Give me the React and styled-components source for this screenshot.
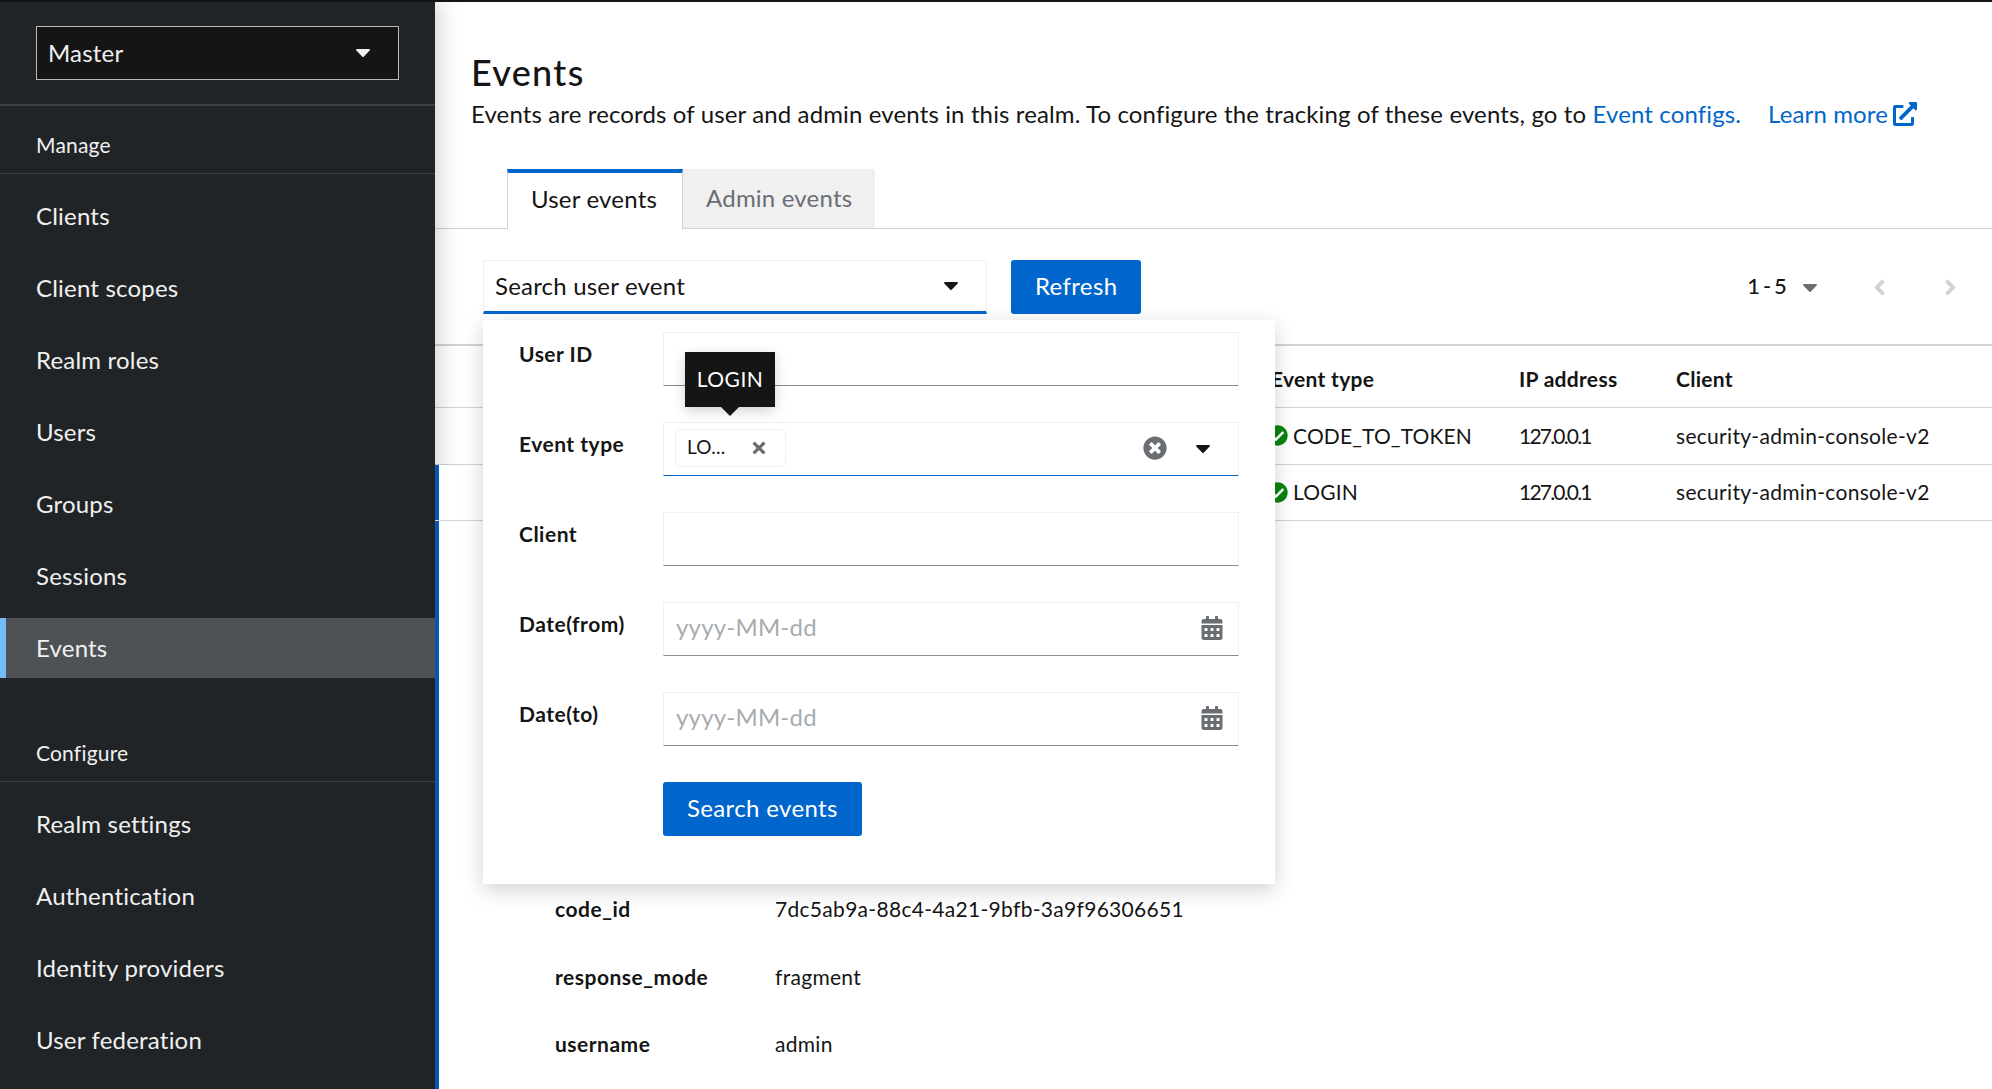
import React from 'react';
import styled, { createGlobalStyle } from 'styled-components';
import {
  FaCaretDown,
  FaTimes,
  FaTimesCircle,
  FaCheckCircle,
  FaCalendarAlt,
  FaExternalLinkAlt,
  FaAngleLeft,
  FaAngleRight
} from 'react-icons/fa';

const GlobalStyle = createGlobalStyle`
  html, body {
    margin: 0;
    padding: 0;
    height: 100%;
    overflow: hidden;
    background: #fff;
  }

  body {
    font-family: "Lato", "Liberation Sans", sans-serif;
    font-size: 24px;
    letter-spacing: 0.2px;
    color: #151515;
  }

  * {
    box-sizing: border-box;
  }
`;

const Page = styled.div`
  height: 1089px;
  display: flex;
  flex-direction: column;
  overflow: hidden;
`;

const TopLine = styled.div`
  height: 2px;
  flex: none;
  background: #151515;
`;

const Body = styled.div`
  flex: 1;
  display: flex;
  min-height: 0;
`;

const Sidebar = styled.nav`
  width: 435px;
  flex: none;
  background: #212427;
  color: #f0f0f0;
  box-shadow: 6px 0 18px rgba(3, 3, 3, 0.16);
  position: relative;
  z-index: 1;
`;

const SelectorWrap = styled.div`
  padding: 24px 36px;
  border-bottom: 2px solid #3c3f42;
`;

const Selector = styled.div`
  height: 54px;
  display: flex;
  align-items: center;
  justify-content: space-between;
  padding: 0 23px 2px 11px;
  background: #151515;
  border: 1px solid #b8bbbe;
  color: #f0f0f0;
  svg {
    font-size: 24px;
  }
`;

const SectionTitle = styled.div`
  height: ${(p) => p.$height}px;
  display: flex;
  align-items: flex-end;
  padding: 0 36px 13px;
  font-size: 21px;
  line-height: 30px;
  color: #f0f0f0;
  border-bottom: 1px solid #3c3f42;
`;

const NavList = styled.div`
  display: flex;
  flex-direction: column;
  gap: 12px;
  padding-top: 12px;
`;

const NavItem = styled.a`
  height: 60px;
  display: flex;
  align-items: center;
  padding-left: ${(p) => (p.$active ? 30 : 36)}px;
  padding-bottom: 2px;
  color: #f0f0f0;
  background: ${(p) => (p.$active ? '#4f5255' : 'transparent')};
  border-left: ${(p) => (p.$active ? '6px solid #73bcf7' : 'none')};
`;

const Main = styled.main`
  flex: 1;
  min-width: 0;
  background: #fff;
  display: flex;
  flex-direction: column;
`;

const Header = styled.header`
  flex: none;
  height: 167px;
  padding: 46px 36px 0;
`;

const Title = styled.h1`
  margin: 0;
  font-size: 36px;
  line-height: 48px;
  font-weight: 500;
  letter-spacing: 1.3px;
  color: #151515;
`;

const Description = styled.p`
  margin: 0;
  line-height: 36px;
  letter-spacing: 0.13px;
  white-space: nowrap;
`;

const LinkText = styled.a`
  color: #06c;
  margin-left: ${(p) => p.$gap || 0}px;
  svg {
    font-size: 24px;
    margin-left: -1px;
    vertical-align: -3px;
  }
`;

const TabBar = styled.div`
  flex: none;
  height: 60px;
  padding-left: 72px;
  display: flex;
  border-bottom: 1px solid #d2d2d2;
`;

const Tab = styled.div`
  height: 60px;
  display: flex;
  align-items: center;
  padding: 0 ${(p) => (p.$active ? 25 : 23)}px 6px 23px;
  color: ${(p) => (p.$active ? '#151515' : '#6a6e73')};
  background: ${(p) => (p.$active ? '#fff' : '#f0f0f0')};
  border-top: 4px solid ${(p) => (p.$active ? '#06c' : '#f0f0f0')};
  border-left: ${(p) => (p.$active ? '1px solid #d2d2d2' : 'none')};
  border-right: ${(p) => (p.$active ? '1px solid #d2d2d2' : 'none')};
  border-bottom: ${(p) => (p.$active ? 'none' : '1px solid #d2d2d2')};
`;

const Toolbar = styled.div`
  flex: none;
  height: 117px;
  padding: 31px 0 0 48px;
  display: flex;
  align-items: flex-start;
  gap: 24px;
  border-bottom: 2px solid #d2d2d2;
  position: relative;
`;

const SearchBox = styled.div`
  position: relative;
  width: 504px;
`;

const SearchSelect = styled.div`
  height: 54px;
  display: flex;
  align-items: center;
  justify-content: space-between;
  padding: 0 23px 2px 11px;
  border: 1px solid #f0f0f0;
  border-bottom: 3px solid #06c;
  svg {
    font-size: 24px;
  }
`;

const PrimaryButton = styled.button`
  height: 54px;
  padding: 0 24px 3px;
  background: #06c;
  color: #fff;
  border: none;
  border-radius: 3px;
  font: inherit;
  letter-spacing: 0.35px;
`;

const Pager = styled.div`
  margin-left: auto;
  height: 54px;
  display: flex;
  align-items: center;
  padding-right: 29px;
`;

const PagerCount = styled.span`
  font-size: 22px;
  font-weight: 500;
  word-spacing: -3px;
  margin-right: 11px;
  padding-bottom: 3px;
`;

const PagerCaret = styled(FaCaretDown)`
  color: #6a6e73;
  font-size: 24px;
  margin-right: 45px;
`;

const PagerArrow = styled.span`
  color: #d2d2d2;
  display: flex;
  font-size: 25px;
  margin-right: ${(p) => p.$gap || 0}px;
`;

const Popover = styled.div`
  position: absolute;
  top: 60px;
  left: 0;
  width: 792px;
  height: 564px;
  padding: 12px 36px 0;
  background: #fff;
  box-shadow: 0 6px 20px rgba(3, 3, 3, 0.18);
  z-index: 5;
`;

const FormRow = styled.div`
  display: grid;
  grid-template-columns: 144px 576px;
  height: 54px;
  margin-bottom: 36px;
`;

const FieldLabel = styled.label`
  font-size: 21px;
  font-weight: 700;
  letter-spacing: 0.5px;
  line-height: 30px;
  padding-top: 7px;
`;

const Field = styled.div`
  position: relative;
  height: 54px;
  display: flex;
  align-items: center;
  padding: 0 12px 2px;
  border: 1px solid #f0f0f0;
  border-bottom: ${(p) => (p.$focus ? '1px solid #06c' : '1px solid #8a8d90')};
`;

const Placeholder = styled.span`
  color: #a9acaf;
  padding-bottom: 3px;
`;

const CalendarIcon = styled(FaCalendarAlt)`
  margin-left: auto;
  margin-right: 2px;
  color: #6a6e73;
  font-size: 24px;
`;

const Chip = styled.div`
  width: 111px;
  height: 38px;
  margin-left: -1px;
  padding: 0 0 3px 11px;
  display: flex;
  align-items: center;
  justify-content: space-between;
  border: 1px solid #f0f0f0;
  border-radius: 4px;
  font-size: 19px;
  svg {
    color: #6a6e73;
    font-size: 18px;
    margin-right: 17px;
    margin-top: 3px;
  }
`;

const ClearIcon = styled(FaTimesCircle)`
  margin-left: auto;
  color: #6a6e73;
  font-size: 24px;
`;

const ComboCaret = styled(FaCaretDown)`
  margin-left: 24px;
  margin-right: 11px;
  font-size: 24px;
`;

const Tooltip = styled.div`
  position: absolute;
  left: 21px;
  top: -71px;
  width: 90px;
  height: 55px;
  padding-bottom: 3px;
  display: flex;
  align-items: center;
  justify-content: center;
  background: #151515;
  color: #fff;
  font-size: 21px;
  letter-spacing: 0.5px;
  box-shadow: 0 4px 12px rgba(3, 3, 3, 0.18);

  &::after {
    content: '';
    position: absolute;
    left: 36px;
    bottom: -9px;
    border-left: 9px solid transparent;
    border-right: 9px solid transparent;
    border-top: 9px solid #151515;
  }
`;

const TableRow = styled.div`
  height: ${(p) => p.$height}px;
  flex: none;
  display: grid;
  grid-template-columns: 836px 248px 157px 1fr;
  align-items: center;
  padding-top: ${(p) => p.$top || 0}px;
  padding-bottom: 2px;
  border-bottom: 1px solid #d2d2d2;
  font-size: 21px;
  letter-spacing: 0.3px;
  background: #fff;
  position: relative;
  z-index: ${(p) => (p.$expanded ? 2 : 'auto')};
  box-shadow: ${(p) => (p.$expanded ? 'inset 4px 0 0 #0458b3' : 'none')};
`;

const HeadCell = styled.div`
  font-weight: 700;
  white-space: nowrap;
`;

const StatusCell = styled.div`
  display: flex;
  align-items: center;
  gap: 5px;
  margin-left: -4px;
  letter-spacing: 0.15px;
  svg {
    color: #0a850f;
    font-size: 21px;
    margin-top: 1px;
  }
`;

const IpCell = styled.div`
  letter-spacing: -1.8px;
`;

const Expanded = styled.div`
  flex: 1;
  position: relative;
  z-index: 2;
  background: #fff;
  box-shadow: inset 4px 0 0 #0458b3;
  padding: 354px 0 0 120px;
`;

const DetailRow = styled.div`
  display: grid;
  grid-template-columns: 220px 1fr;
  height: 67.5px;
  align-items: center;
  font-size: 21px;
  letter-spacing: 0.3px;
`;

const DetailKey = styled.div`
  font-weight: 700;
  letter-spacing: 0.5px;
`;

const navManage = ['Clients', 'Client scopes', 'Realm roles', 'Users', 'Groups', 'Sessions', 'Events'];
const navConfigure = ['Realm settings', 'Authentication', 'Identity providers', 'User federation'];

const events = [
  { type: 'CODE_TO_TOKEN', ip: '127.0.0.1', client: 'security-admin-console-v2' },
  { type: 'LOGIN', ip: '127.0.0.1', client: 'security-admin-console-v2' }
];

const details = [
  { key: 'code_id', value: '7dc5ab9a-88c4-4a21-9bfb-3a9f96306651' },
  { key: 'response_mode', value: 'fragment' },
  { key: 'username', value: 'admin' }
];

export default function App() {
  return (
    <Page>
      <GlobalStyle />
      <TopLine />
      <Body>
        <Sidebar>
          <SelectorWrap>
            <Selector>
              Master <FaCaretDown />
            </Selector>
          </SelectorWrap>
          <SectionTitle $height={68}>Manage</SectionTitle>
          <NavList>
            {navManage.map((item) => (
              <NavItem key={item} $active={item === 'Events'}>
                {item}
              </NavItem>
            ))}
          </NavList>
          <SectionTitle $height={104}>Configure</SectionTitle>
          <NavList>
            {navConfigure.map((item) => (
              <NavItem key={item}>{item}</NavItem>
            ))}
          </NavList>
        </Sidebar>

        <Main>
          <Header>
            <Title>Events</Title>
            <Description>
              Events are records of user and admin events in this realm. To configure the tracking of these events, go to{' '}
              <LinkText>Event configs.</LinkText>
              <LinkText $gap={27}>
                Learn more <FaExternalLinkAlt />
              </LinkText>
            </Description>
          </Header>

          <TabBar>
            <Tab $active>User events</Tab>
            <Tab>Admin events</Tab>
          </TabBar>

          <Toolbar>
            <SearchBox>
              <SearchSelect>
                Search user event <FaCaretDown />
              </SearchSelect>
              <Popover>
                <FormRow>
                  <FieldLabel>User ID</FieldLabel>
                  <Field />
                </FormRow>
                <FormRow>
                  <FieldLabel>Event type</FieldLabel>
                  <Field $focus>
                    <Tooltip>LOGIN</Tooltip>
                    <Chip>
                      LO... <FaTimes />
                    </Chip>
                    <ClearIcon />
                    <ComboCaret />
                  </Field>
                </FormRow>
                <FormRow>
                  <FieldLabel>Client</FieldLabel>
                  <Field />
                </FormRow>
                <FormRow>
                  <FieldLabel>Date(from)</FieldLabel>
                  <Field>
                    <Placeholder>yyyy-MM-dd</Placeholder>
                    <CalendarIcon />
                  </Field>
                </FormRow>
                <FormRow>
                  <FieldLabel>Date(to)</FieldLabel>
                  <Field>
                    <Placeholder>yyyy-MM-dd</Placeholder>
                    <CalendarIcon />
                  </Field>
                </FormRow>
                <FormRow>
                  <span />
                  <div>
                    <PrimaryButton>Search events</PrimaryButton>
                  </div>
                </FormRow>
              </Popover>
            </SearchBox>
            <PrimaryButton>Refresh</PrimaryButton>
            <Pager>
              <PagerCount>1 - 5</PagerCount>
              <PagerCaret />
              <PagerArrow $gap={46}>
                <FaAngleLeft />
              </PagerArrow>
              <PagerArrow>
                <FaAngleRight />
              </PagerArrow>
            </Pager>
          </Toolbar>

          <TableRow $height={62} $top={6}>
            <span />
            <HeadCell>Event type</HeadCell>
            <HeadCell>IP address</HeadCell>
            <HeadCell>Client</HeadCell>
          </TableRow>
          {events.map((ev) => (
            <TableRow key={ev.type} $height={ev.type === 'LOGIN' ? 56 : 57} $expanded={ev.type === 'LOGIN'}>
              <span />
              <StatusCell>
                <FaCheckCircle /> {ev.type}
              </StatusCell>
              <IpCell>{ev.ip}</IpCell>
              <div>{ev.client}</div>
            </TableRow>
          ))}
          <Expanded>
            {details.map((d) => (
              <DetailRow key={d.key}>
                <DetailKey>{d.key}</DetailKey>
                <div>{d.value}</div>
              </DetailRow>
            ))}
          </Expanded>
        </Main>
      </Body>
    </Page>
  );
}
